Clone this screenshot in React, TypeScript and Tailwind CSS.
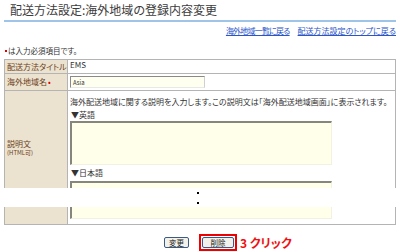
import React from 'react';

const labelCell = 'border border-[#b4b4b4] bg-[#ebe3cf] text-[#6b3d1c] align-middle pl-[2px] w-[63px]';
const valueCell = 'border border-[#b4b4b4] bg-white align-top pl-[2px]';

function FakeTextarea({ className = '' }: { className?: string }) {
  return (
    <div
      className={`w-[262px] bg-[#ffffea] border-t-2 border-l-2 border-b border-r border-t-[#86867c] border-l-[#86867c] border-b-[#f2f2e4] border-r-[#f2f2e4] ${className}`}
    />
  );
}

export default function App() {
  return (
    <div className="relative w-[400px] h-[252px] overflow-hidden bg-white text-[#333] font-['Noto_Sans_CJK_JP',sans-serif] [font-feature-settings:'palt']">
      <div className="px-[4px]">
        {/* Title */}
        <h1 className="h-[20px] pl-[6px] pt-[2px] text-[12px] leading-[16px] font-normal text-[#3c3c3c]">
          配送方法設定:海外地域の登録内容変更
        </h1>
        <div className="h-[2px] bg-[#9ec5e8]" />

        {/* Back links */}
        <div className="flex justify-end gap-[8px] mt-[4px] h-[10px] text-[8px] leading-[10px]">
          <a href="#" className="text-[#2a54c8] underline tracking-[-0.8px]">海外地域一覧に戻る</a>
          <a href="#" className="text-[#2a54c8] underline">配送方法設定のトップに戻る</a>
        </div>

        {/* Required note */}
        <p className="mt-[10px] h-[10px] flex items-center text-[7.5px] leading-[10px]">
          <span className="inline-block w-[2px] h-[2px] bg-[#e00000] mr-[1px] ml-[1px]" />
          は入力必須項目です。
        </p>

        {/* Form table */}
        <table className="mt-[3px] w-[392px] border-collapse text-[8px] leading-[10px]">
          <tbody>
            <tr className="h-[14px]">
              <td className={labelCell}>配送方法タイトル</td>
              <td className={`${valueCell} align-middle`}>EMS</td>
            </tr>
            <tr className="h-[17px]">
              <td className={labelCell}>
                海外地域名<span className="text-[#e00000] ml-[1px]">•</span>
              </td>
              <td className={`${valueCell} align-middle`}>
                <div className="mt-[2px] w-[135px] h-[12px] bg-[#fffff0] border-t border-l border-[#8a8a8a] border-b-[#e8e8e8] border-r-[#d0d0d0] border-b border-r pl-[2px] text-[6px] leading-[11px]">
                  Asia
                </div>
              </td>
            </tr>
            <tr className="h-[134px]">
              <td className={`${labelCell} !align-top`}>
                <div className="pt-[48px]">
                  <div className="text-[8px] leading-[10px]">説明文</div>
                  <div className="text-[6px] leading-[7px]">(HTML可)</div>
                </div>
              </td>
              <td className={`${valueCell} pt-[6px]`}>
                <div className="h-[10px] whitespace-nowrap">
                  海外配送地域に関する説明を入力します。この説明文は「海外配送地域画面」に表示されます。
                </div>
                <div className="mt-[3px] h-[10px] pl-[1px]">▼英語</div>
                <FakeTextarea className="mt-[1px] h-[44px]" />
                <div className="mt-[3px] h-[10px] pl-[1px]">▼日本語</div>
                <FakeTextarea className="mt-[3px] h-[38px]" />
              </td>
            </tr>
          </tbody>
        </table>

        {/* Buttons */}
        <div className="mt-[9px] flex items-center pl-[160px]">
          <button className="w-[25px] h-[11px] rounded-[2px] border border-[#3c5a86] bg-[#f2f1ea] text-[7.5px] leading-[9px] text-[#222]">
            変更
          </button>
          <div className="ml-[10px] border-2 border-[#ee0000] p-[1px]">
            <button className="block w-[32px] h-[11px] rounded-[2px] border border-[#3c5a86] bg-[#f2f1ea] text-[7.5px] leading-[9px] text-[#222]">
              削除
            </button>
          </div>
          <span className="ml-[3px] text-[12px] leading-[14px] font-bold text-[#ee1111]">3 クリック</span>
        </div>
      </div>

      {/* Cut marker over the description area */}
      <div className="absolute left-0 top-[188px] w-[400px] h-[19px] bg-white">
        <span className="absolute left-[197px] top-[4px] w-[2px] h-[2px] bg-black" />
        <span className="absolute left-[197px] top-[14px] w-[2px] h-[2px] bg-black" />
      </div>
    </div>
  );
}
